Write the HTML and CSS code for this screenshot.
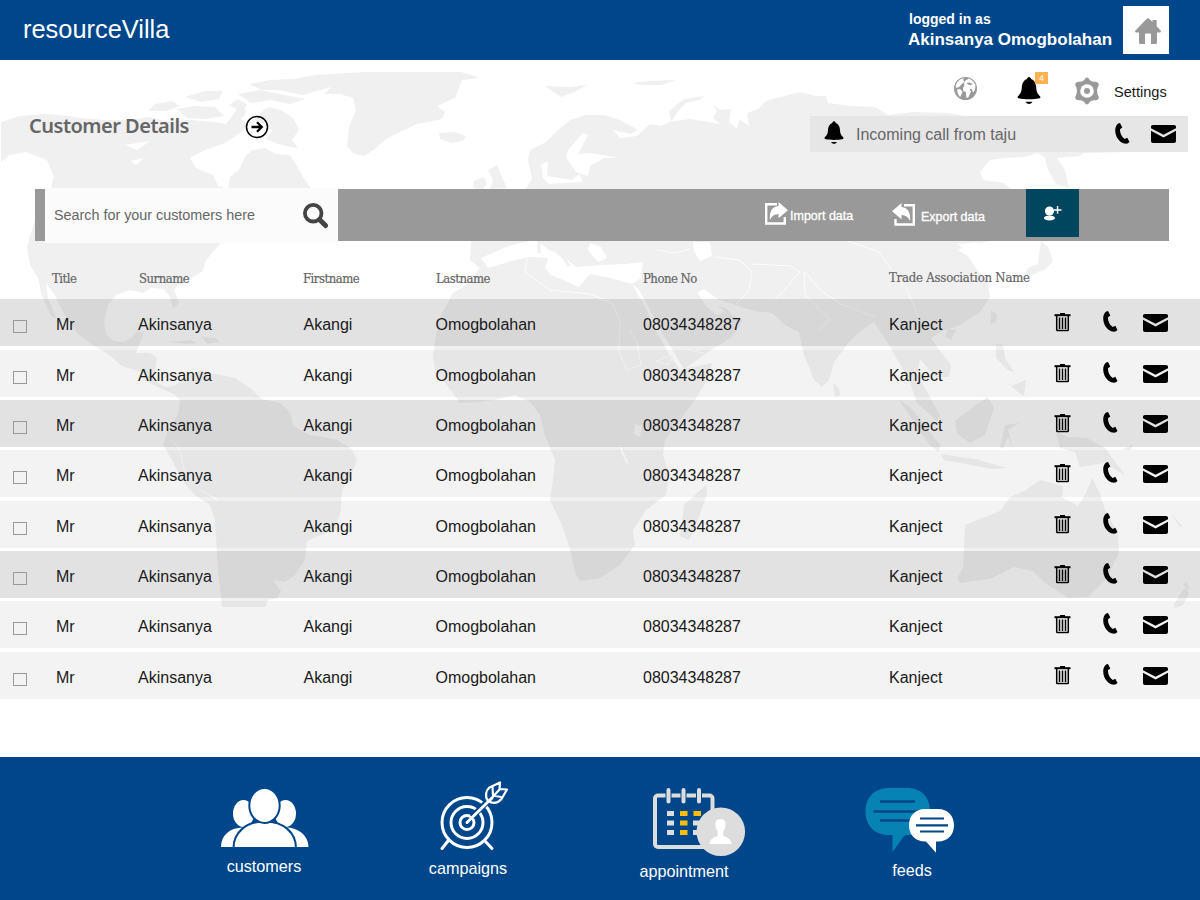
FILE: index.html
```html
<!DOCTYPE html>
<html lang="en">
<head>
<meta charset="utf-8">
<title>resourceVilla - Customer Details</title>
<link rel="stylesheet" href="styles.css">
</head>
<body>
<svg class="sprite" aria-hidden="true">
  <symbol id="bell" viewBox="0 0 24 28"><path d="M12 0c-1.300 0-1.700 1-2 2-3.500 1.200-5 4.500-5.200 8.500C4.500 15.500 3.200 17 1 19.200.1 20.200.5 21.300 2.500 21.500 6 22.500 18 22.500 21.500 21.500c2-.2 2.400-1.300 1.500-2.300-2.200-2.200-3.500-3.700-3.800-8.700C19 6.500 17.500 3.200 14 2c-.3-1-.7-2-2-2zM8.500 24.800h7c-.5 1.200-2 2.200-3.500 2.200s-3-1-3.500-2.200z"/></symbol>
  <symbol id="phone" viewBox="0 0 15 21"><path d="M3.200.5 5 0 7.300 4.500 5 6.200C4.800 10.500 6.500 13.800 9.800 16L12.300 14.800 14.500 19 12.500 20.600C8 21.400 3.500 18 1.500 13.500 -.6 8.500-.2 3 3.200.5z"/></symbol>
  <symbol id="mail" viewBox="0 0 25 18"><path d="M2 0h21c1.200 0 2 .8 2 1.800v1.400L12.500 9.700 0 3.200V1.800C0 .8.800 0 2 0zM0 5.800l12.500 6.800L25 5.800V16c0 1.200-.8 2-2 2H2c-1.200 0-2-.8-2-2z"/></symbol>
  <symbol id="trash" viewBox="0 0 17 19"><path d="M6 0h5v2H6z"/><path d="M.5 1.200h16v2H.5z"/><path d="M2.700 3v13.700q0 .8.800.8h10q.8 0 .8-.8V3M5.500 4.500v11.500M8.500 4.500v11.500M11.500 4.500v11.500" fill="none" stroke="#000" stroke-width="1.500"/></symbol>
</svg>

<header class="topbar">
  <div class="brand">resourceVilla</div>
  <div class="account">
    <div class="account-label">logged in as</div>
    <div class="account-name">Akinsanya Omogbolahan</div>
  </div>
  <a class="home">
    <svg width="26" height="26" viewBox="0 0 26 26"><path fill="#999" d="M11.800.8Q13-.4 14.200.8L17.500 4V2h4.200v6.200l4.300 4.800q0 1.500-1.500 1.500H22V24.500Q22 26 20.500 26H16V16.500q0-1-1-1h-4q-1 0-1 1V26H5.500Q4 26 4 24.500V14.500H1.500Q0 14.500 0 13z"/></svg>
  </a>
</header>

<main class="page">
  <svg class="map" viewBox="0 60 1200 560" width="1200" height="560" aria-hidden="true">
    <g fill="#f0f0f0">
      <path d="M1 122 20 116 45 114 60 115 82 118 105 120 130 120 148 117 165 121 190 120 215 122 226 124 233 115 239 105 246 111 243 120 251 123 240 133 225 143 205 150 190 158 196 168 213 175 218 186 228 189 230 177 239 170 245 157 252 150 265 148 276 154 290 155 297 166 303 177 312 190 300 243 221 243 211 254 205 262 203 271 190 279 178 286 174 290 179 303 173 309 170 297 164 289 151 288 143 293 130 290 116 295 108 305 104 322 106 334 114 341 124 342 132 338 137 331 144 332 139 345 136 353 150 353 157 358 155 371 153 380 165 387 174 386 190 375 201 370 215 374 235 378 250 388 262 399 280 403 290 412 293 425 300 430 310 435 335 439 351 448 357 460 351 475 342 490 341 510 335 530 320 535 307 541 305 560 295 575 285 582 273 580 281 591 278 598 268 600 265 607 222 607 218 570 215 520 210 505 195 495 182 480 172 460 163 445 168 430 178 415 180 400 174 394 162 389 150 383 142 372 122 366 108 354 94 346 77 333 65 315 54 294 46 283 48 298 56 318 51 316 42 296 38 278 30 265 27 247 35 220 50 190 54 177 47 160 25 152 10 155 1 162z"/>
      <path d="M148 111 155 104 172 101 180 106 166 111zM177 109 195 106 215 107 224 116 205 119 187 118zM185 97 205 91 223 91 219 99 201 102zM229 105 238 99 247 104 243 113zM238 94 260 90 284 95 306 99 289 104 271 100 251 103zM249 84 270 80 294 79 315 75 348 73 365 72 348 80 331 87 303 95 279 90 262 90zM252 117 269 107 281 110 294 119 299 130 292 140 299 149 278 144 266 139 273 130 261 127z"/>
      <path d="M350 76 365 72H461L480 78 462 80 455 98 437 106 445 112 442 119 417 124 400 132 386 139 375 149 364 156 353 153 347 146 349 127 356 110 353 98 340 94 325 94 335 82z"/>
      <path d="M439 133 455 132 466 136 463 141 451 143 440 139zM545 86 570 87 587 85 574 92 561 97 552 91zM632 83 650 81 676 80 662 85 640 85zM488 170 497 165 501 175 507 188 490 189 493 180zM474 181 484 177 487 184 483 189 473 188zM671 122 669 111 684 99 704 96 700 100 686 103 679 110z"/>
      <path d="M528 160 530 150 546 142 558 130 570 120 585 115 604 115 620 120 638 130 630 134 613 130 620 138 637 136 650 124 661 126 669 122 690 119 720 124 713 118 717 111 713 104 720 110 731 109 729 122 737 129 739 119 749 126 747 113 758 109 766 101 800 92 815 96 826 96 828 103 851 106 875 107 888 115 913 112 949 113 975 118 1020 118 1041 117 1055 118 1080 125 1110 140 1130 152 1083 153 1080 156 1057 158 1065 170 1069 188 1056 184 1048 170 1045 158 1038 153 1024 157 1005 158 990 160 980 172 983 180 1004 183 1012 190 1000 220 990 241 968 245 958 250 968 256 977 270 987 280 990 297 980 312 960 325 943 331 931 338 940 351 951 365 949 377 936 377 920 359 917 375 930 397 940 416 937 421 917 403 909 380 893 352 884 337 874 322 862 330 850 341 834 362 829 380 822 387 814 380 803 352 799 332 785 325 772 313 755 311 735 305 719 300 704 289 702 292 710 305 726 308 732 315 743 320 731 338 711 350 684 369 676 356 663 334 650 310 639 290 632 284 645 307 657 333 668 352 680 370 712 363 709 377 695 400 680 420 665 440 663 455 669 475 666 495 646 510 633 530 635 545 620 565 600 578 580 581 576 575 570 550 562 525 550 500 553 480 555 460 545 435 540 415 530 402 515 395 495 400 475 402 460 403 447 385 435 370 433 355 436 335 441 315 453 293 465 286 480 268 470 260 471 241 525 190 532 179z"/>
      <path d="M955 421 977 404 988 397 994 408 985 435 970 443 957 434zM899 400 910 407 928 430 941 446 938 452 929 444zM941 454 960 457 975 459 1007 468 992 469 944 460zM1056 432 1068 437 1087 438 1105 448 1125 475 1104 463 1080 467 1075 452 1060 448zM833 383 839 388 840 395 835 397zM706 485 707 495 696 525 689 540 680 536 684 505zM965 525 1000 511 1010 497 1026 490 1040 480 1063 486 1062 497 1078 506 1086 493 1092 478 1100 494 1105 510 1118 533 1119 553 1107 578 1088 597 1068 598 1045 583 1033 571 1014 567 990 579 960 583 957 578 963 568zM1174 605 1180 594 1186 587 1189 594 1183 605 1175 608zM1183 585 1187 582 1190 590zM1170 512 1182 526 1180 527zM996 344 1003 345 1005 358 1014 372 1008 370 996 358zM1011 386 1026 380 1024 396 1018 392zM991 311 997 314 996 322 990 324zM948 329 956 330 951 340 945 336zM1005 425 1020 423 1008 429 1012 445 1008 437 1003 449 1000 447zM1041 241 1048 247 1053 261 1046 269 1032 275 1024 276 1028 268 1038 264zM1122 450 1133 444 1131 450zM170 342 190 340 197 343 185 344zM202 337 216 338 219 342 207 344z"/>
    </g>
    <g fill="#fff">
      <path d="M481 258 506 247 524 242 536 240 549 250 561 254 576 267 588 266 601 265 624 264 643 262 641 278 632 284 611 278 590 274 579 287 563 280 551 275 545 268 548 258 530 257 519 259 488 268zM590 243 601 247 607 258 598 262 588 250zM693 242 710 242 712 256 700 261 694 251zM568 150 566 157 576 172 588 176 590 166 604 158 618 158 591 153 578 154 588 135 583 133zM541 165 548 161 547 176 572 180 580 174 582 182 549 184 543 178zM635 424 642 426 640 437 634 434zM620 445 628 462 627 464 621 452zM697 292 705 289 713 304 725 311 717 315 707 307zM958 244 978 242 991 250 998 246 1006 259 999 272 980 270 970 257z"/>
      <path d="M125 145 150 141 137 150zM131 161 144 158 136 165zM241 118 255 109 263 111 254 120 270 127 255 132z"/>
    </g>
    <path fill="none" stroke="#f0f0f0" stroke-width="3" d="M548 242 555 250 564 258 569 266M539 241v12"/>
    <path fill="none" stroke="#fff" stroke-width=".8" d="M527 259 525 272 550 290 590 294 612 303 620 320 619 352 627 370 641 365 637 343 629 329M657 250 675 253 690 249M715 257 740 260 752 272 749 290 736 304M752 264 790 266 800 272 775 300M805 272 820 290 841 304 875 317M848 241 879 252 903 286M905 286 920 320M804 272 805 294 830 320 818 331M687 350 704 353 708 361M656 361 674 354 668 365zM172 440 180 450 184 470 200 490 218 500"/>
  </svg>

  <section class="utilities">
    <svg class="globe" width="23" height="23" viewBox="0 0 23 23"><circle cx="11.500" cy="11.500" r="11.500" fill="#999"/><path fill="#fff" d="M3 5.500 6 2.500 10 1 9 3l1.500 1.500L8 7 5 10 2.500 11 1.500 9zM3 12.500l3-.5 2.500 2.500L7 18.500 6 20 4 17zM11.500 3.500 15 1.500 19 4 21.500 8l-.5 5-2 2.500-1.500-4-2 1 1.500 2-3 6.500-1.700-.5-.5-5.500-2.500-1-.3-3L10.500 8 9.800 6.500z"/><path fill="#999" d="m12.500 6 3-.5 3 1.500-1.500 1.200-2.500-.4z"/></svg>
    <div class="alerts"><svg width="24" height="28"><use href="#bell"/></svg><span class="badge">4</span></div>
    <svg class="gear" width="26" height="28" viewBox="0 0 26 28"><path fill="#999" d="M13 .5q1.600 0 2.200 1.800Q16.500 4.600 19.500 4.800q3.800-.6 5 1.400 1 1.800-.8 4.100-1.400 3.700 0 7.400 1.800 2.300.8 4.100-1.200 2-5 1.400-3 .2-4.300 2.500Q14.600 27.500 13 27.500t-2.200-1.800Q9.500 23.400 6.500 23.200q-3.800.6-5-1.400-1-1.800.8-4.100 1.400-3.700 0-7.400Q.5 8 1.500 6.200q1.200-2 5-1.400 3-.2 4.300-2.500Q11.400.5 13 .5z"/><circle cx="13" cy="14" r="6.800" fill="#fff"/><circle cx="13" cy="14" r="3" fill="#999"/></svg>
    <span class="settings">Settings</span>
  </section>

  <section class="heading">
    <h1>Customer Details</h1>
    <svg class="go" width="24" height="24" viewBox="0 0 24 24" fill="none" stroke="#000"><circle cx="12" cy="12" r="10.500" stroke-width="1.500"/><path stroke-width="2.300" d="M6.500 12h10M12 7.200 16.800 12 12 16.800"/></svg>
    <div class="call">
      <svg class="call-bell" width="20" height="24"><use href="#bell"/></svg>
      <span>Incoming call from taju</span>
      <svg class="call-phone" width="15" height="21"><use href="#phone"/></svg>
      <svg width="25" height="18"><use href="#mail"/></svg>
    </div>
  </section>

  <section class="toolbar">
    <div class="search">
      <span>Search for your customers here</span>
      <svg width="26" height="26" viewBox="0 0 26 26" fill="none" stroke="#444"><circle cx="10.200" cy="10.200" r="8.300" stroke-width="3.800"/><path stroke-linecap="round" d="m17.500 17.500 5 5" stroke-width="5"/></svg>
    </div>
    <div class="tool import">
      <svg width="23" height="23" viewBox="0 0 23 23"><path fill="none" stroke="#fff" stroke-width="2.400" d="M12 2.200H1.200v19.300h18.600V15"/><path fill="#fff" d="M13.500 0 23 8.200l-9.500 8V12C9.500 12 6.500 14 5 18 4 10 7 4.500 13.500 4z"/></svg>
      <span>Import data</span>
    </div>
    <div class="tool export">
      <svg width="23" height="23" viewBox="0 0 23 23"><path fill="none" stroke="#fff" stroke-width="2.400" d="M12 2.200h9.800v19.300H3.500V16"/><path fill="#fff" d="M9.500 0 0 8.200l9.500 8V12c4 0 7 2 8.500 6 1-8-2-13.500-8.500-14z"/></svg>
      <span>Export data</span>
    </div>
    <div class="add">
      <svg width="18" height="15" viewBox="0 0 18 15" fill="#fff"><circle cx="5.500" cy="5" r="4.600"/><ellipse cx="5.500" cy="12" rx="5.500" ry="2.600"/><path d="M12.800 0h1.500v3.200H17.500v1.500h-3.200v3h-1.500v-3H10V3.200h2.800z"/></svg>
    </div>
  </section>

  <section class="columns">
    <span>Title</span><span>Surname</span><span>Firstname</span><span>Lastname</span><span>Phone No</span><span class="c-trade">Trade Association Name</span>
  </section>

  <section class="rows">
    <div class="row dark"><i class="check"></i><span>Mr</span><span>Akinsanya</span><span>Akangi</span><span>Omogbolahan</span><span>08034348287</span><span>Kanject</span><svg class="i-trash"><use href="#trash"/></svg><svg class="i-phone"><use href="#phone"/></svg><svg class="i-mail"><use href="#mail"/></svg></div>
    <div class="row wide"><i class="check"></i><span>Mr</span><span>Akinsanya</span><span>Akangi</span><span>Omogbolahan</span><span>08034348287</span><span>Kanject</span><svg class="i-trash"><use href="#trash"/></svg><svg class="i-phone"><use href="#phone"/></svg><svg class="i-mail"><use href="#mail"/></svg></div>
    <div class="row dark"><i class="check"></i><span>Mr</span><span>Akinsanya</span><span>Akangi</span><span>Omogbolahan</span><span>08034348287</span><span>Kanject</span><svg class="i-trash"><use href="#trash"/></svg><svg class="i-phone"><use href="#phone"/></svg><svg class="i-mail"><use href="#mail"/></svg></div>
    <div class="row"><i class="check"></i><span>Mr</span><span>Akinsanya</span><span>Akangi</span><span>Omogbolahan</span><span>08034348287</span><span>Kanject</span><svg class="i-trash"><use href="#trash"/></svg><svg class="i-phone"><use href="#phone"/></svg><svg class="i-mail"><use href="#mail"/></svg></div>
    <div class="row wide"><i class="check"></i><span>Mr</span><span>Akinsanya</span><span>Akangi</span><span>Omogbolahan</span><span>08034348287</span><span>Kanject</span><svg class="i-trash"><use href="#trash"/></svg><svg class="i-phone"><use href="#phone"/></svg><svg class="i-mail"><use href="#mail"/></svg></div>
    <div class="row dark"><i class="check"></i><span>Mr</span><span>Akinsanya</span><span>Akangi</span><span>Omogbolahan</span><span>08034348287</span><span>Kanject</span><svg class="i-trash"><use href="#trash"/></svg><svg class="i-phone"><use href="#phone"/></svg><svg class="i-mail"><use href="#mail"/></svg></div>
    <div class="row"><i class="check"></i><span>Mr</span><span>Akinsanya</span><span>Akangi</span><span>Omogbolahan</span><span>08034348287</span><span>Kanject</span><svg class="i-trash"><use href="#trash"/></svg><svg class="i-phone"><use href="#phone"/></svg><svg class="i-mail"><use href="#mail"/></svg></div>
    <div class="row wide"><i class="check"></i><span>Mr</span><span>Akinsanya</span><span>Akangi</span><span>Omogbolahan</span><span>08034348287</span><span>Kanject</span><svg class="i-trash"><use href="#trash"/></svg><svg class="i-phone"><use href="#phone"/></svg><svg class="i-mail"><use href="#mail"/></svg></div>
  </section>
</main>

<footer class="dock">
  <a class="dock-item customers">
    <svg width="120" height="76" viewBox="204 781 120 76" fill="#fff"><ellipse cx="243.500" cy="813.500" rx="10.500" ry="13.500"/><ellipse cx="285.500" cy="813.500" rx="10.500" ry="13.500"/><path d="M221 847c0-11 8-19.500 22-19.500h42c14 0 23 8 23.500 19.500z"/><path stroke="#00468a" stroke-width="2" d="M233.500 848c0-15 12-26.500 31.300-26.500S296 833 296 848z"/><ellipse cx="264.500" cy="805.500" rx="15.200" ry="17.500" stroke="#00468a" stroke-width="2"/><path fill="#00468a" d="M220 847h90v2h-90z"/></svg>
    <span>customers</span>
  </a>
  <a class="dock-item campaigns">
    <svg width="120" height="76" viewBox="408 781 120 76" fill="none" stroke="#fff" stroke-width="3" stroke-linecap="round" stroke-linejoin="round"><circle cx="467" cy="822.500" r="25"/><circle cx="467" cy="822.500" r="16"/><circle cx="467" cy="822.500" r="7"/><path stroke="#00468a" stroke-width="6" stroke-linecap="butt" d="m472 817 14-14"/><path d="m467 822.500 25-24.500M448 841l-6 7.500M485 841l7 7.500"/><path stroke-width="2.200" d="M488 801c-3.500-5-2-11 1.500-13.500l10.500-5-.5 6.500 7.500.5-5.500 9.500c-3.500 4-8 5-13.500 2zM489 801l11-12M492.500 787l.5 8.500 8 1.500"/></svg>
    <span>campaigns</span>
  </a>
  <a class="dock-item appointment">
    <svg width="124" height="76" viewBox="624 781 124 76"><rect x="655" y="795.500" width="57.500" height="51.500" rx="3" fill="none" stroke="#ddd" stroke-width="4"/><path stroke="#00468a" stroke-width="6" d="M668.500 793v7M683.500 793v7M699 793v7"/><path stroke="#ddd" stroke-width="4" stroke-linecap="round" d="M668.500 790v11.500M683.500 790v11.500M699 790v11.500"/><path fill="#ddd" d="M667 811h7v5h-7zM667 820.500h7v5h-7zM667 830h7v5h-7zM693 820.500h8v5h-8zM693 830h8v5h-8z"/><path fill="#fcbf09" d="M680 811h7.500v5H680zM693.500 811h7.500v5h-7.500zM680 820.500h7.500v5H680zM680 830h7.500v5H680z"/><circle cx="720.800" cy="831.700" r="24.300" fill="#ddd"/><path fill="#fff" d="M720.500 819c4.500 0 5.800 3 4.800 7.500 0 2.500-1.500 3.500-2 5v4c2 2 7.700 2 8.200 8.500h-22c.5-6.500 6.200-6.500 8.200-8.500v-4c-.7-1.500-2-2.500-2-5-1-4.500.3-7.500 4.800-7.500z"/></svg>
    <span>appointment</span>
  </a>
  <a class="dock-item feeds">
    <svg width="120" height="76" viewBox="852 781 120 76"><path fill="#0683b3" d="M889 788h18c14 0 23 9 23 23.500S921 835 907 835l-3 1-11.500 16V835H889c-14 0-23.500-9-23.500-23.500S875 788 889 788z"/><path stroke="#00468a" stroke-width="2.500" d="M880 801.500h35M873.500 811.500H920M880 820.500h30"/><path fill="#fff" d="M925 809h13c9.500 0 16 6.500 16 16.300 0 9.700-6.500 16.200-16 16.200h-2v11.300L926 841.500h-1c-9.500 0-16-6.500-16-16.200C909 815.500 915.500 809 925 809z"/><path stroke="#00468a" stroke-width="2.200" d="M920 818.500h24M916 825.300h32M920 831.500h24"/></svg>
    <span>feeds</span>
  </a>
</footer>
</body>
</html>
```

FILE: styles.css
```css
* { box-sizing: border-box; }
body { margin: 0; width: 1200px; height: 900px; overflow: hidden; background: #fff; font-family: "Liberation Sans", Arial, sans-serif; color: #1a1a1a; }
svg { display: block; flex: none; }
.sprite { position: absolute; width: 0; height: 0; }

.topbar { display: flex; height: 60px; background: #00468a; color: #fff; }
.brand { width: 885px; padding: 15px 0 0 23px; font-size: 25.400px; line-height: 29px; }
.account { width: 215px; margin-left: 23px; padding-top: 11px; font-weight: bold; white-space: nowrap; }
.account-label { padding-left: 1px; font-size: 14px; line-height: 16px; }
.account-name { font-size: 17px; line-height: 25px; }
.home { display: flex; align-items: center; justify-content: center; width: 46px; height: 48px; margin-top: 6px; padding: 2px 0 0 4px; background: #fff; }

.page { position: relative; height: 697px; }
.map { position: absolute; inset: 0 auto auto 0; }
.page > section { position: relative; }

.utilities { display: flex; height: 56px; padding: 17px 0 0 954px; }
.alerts { position: relative; width: 24px; margin-left: 40px; }
.badge { position: absolute; left: 18px; top: -5px; width: 13px; height: 12px; background: #ffb14f; color: #fff; font-size: 9px; line-height: 12px; text-align: center; }
.gear { margin-left: 33px; }
.settings { margin: 6px 0 0 14px; font-size: 14.600px; line-height: 18px; }

.heading { display: flex; height: 73px; padding-left: 29px; }
h1 { width: 217px; margin: -4px 0 0; color: #666; font: 600 20px/27px "Noto Sans", "Open Sans", sans-serif; letter-spacing: -.5px; white-space: nowrap; }
.go { margin: -1px 0 0 -1px; }
.call { display: flex; align-items: center; width: 378px; height: 36px; margin-left: 541px; padding-left: 14px; background: #e6e6e6; color: #666; font-size: 16px; }
.call span { width: 271px; padding: 1px 0 0 12px; }
.call-bell { margin-top: -2px; }
.call-phone { margin: -1px 21px 0 0; }

.toolbar { display: flex; width: 1134px; height: 52px; margin-left: 35px; background: #999; color: #fff; }
.search { display: flex; align-items: center; width: 293px; height: 55px; margin: -1px 0 0 10px; padding-left: 9px; background: #fbfbfb; color: #666; font-size: 14.350px; }
.search span { width: 249px; padding-bottom: 2px; }
.tool { display: flex; font-size: 12.500px; line-height: 16px; -webkit-text-stroke: .3px #fff; }
.import { width: 127px; margin-left: 427px; padding-top: 13px; }
.import span { padding: 6px 0 0 2px; }
.export { width: 134px; padding-top: 14px; }
.export span { padding: 6px 0 0 6px; }
.add { display: flex; align-items: center; justify-content: center; width: 53px; height: 48px; background: #00465e; }

.columns { display: grid; grid-template-columns: 87px 164px 133px 207px 246px auto; height: 58px; padding: 30px 0 0 52px; color: #666; font: 13px/16px "DejaVu Serif Condensed", "DejaVu Serif", serif; font-stretch: condensed; letter-spacing: -.5px; -webkit-text-stroke: .2px #666; white-space: nowrap; }
.c-trade { letter-spacing: -.2px; margin-top: -1px; }

.rows { display: flex; flex-direction: column; gap: 3px; }
.row { display: grid; grid-template-columns: 43px 82px 165.500px 132px 207.500px 246px 165px 49px 40px 25px; align-items: center; height: 47px; padding-left: 13px; background: rgba(160, 160, 160, .13); font-size: 16px; }
.row.dark { background: rgba(158, 158, 158, .3); }
.row.wide { margin-top: 1px; }
.row span { padding-top: 4px; }
.check { width: 14px; height: 13px; margin-top: 8px; border: 1px solid #999; }
.i-trash { width: 17px; height: 19px; margin-bottom: 1px; }
.i-phone { width: 15px; height: 21px; margin-bottom: 2px; }
.i-mail { width: 25px; height: 18px; margin-top: 1px; }

.dock { display: flex; height: 143px; padding: 24px 0 0 204px; background: #00468a; color: #fff; font-size: 16.200px; text-align: center; }
.dock-item { width: 120px; }
.dock-item span { display: block; line-height: 18px; }
.campaigns { margin-left: 84px; }
.campaigns span { padding-top: 2px; }
.appointment { width: 124px; margin-left: 96px; }
.appointment span { padding: 5px 4px 0 0; }
.feeds { margin-left: 104px; }
.feeds span { padding-top: 4px; }
```
